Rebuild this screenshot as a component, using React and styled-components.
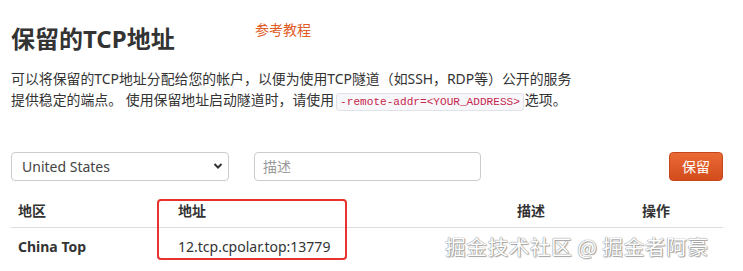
import React from "react";
import styled, { createGlobalStyle } from "styled-components";

const Global = createGlobalStyle`
  html, body { margin: 0; padding: 0; background: #fff; }
  body {
    font-family: "Noto Sans", "Noto Sans CJK SC", sans-serif;
    color: #333;
    width: 743px;
    height: 271px;
    overflow: hidden;
  }
`;

const Page = styled.div`
  position: relative;
  width: 712px;
  padding: 0 20px 0 11px;
`;

const Header = styled.div`
  display: flex;
  align-items: flex-start;
  height: 62px;
`;

const Title = styled.h1`
  margin: 23px 0 0;
  font-size: 24px;
  line-height: 32px;
  font-weight: 700;
  color: #333;
  width: 244px;
`;

const Link = styled.a`
  margin-top: 20px;
  font-size: 14px;
  line-height: 20px;
  color: #e05a24;
  text-decoration: none;
`;

const Lead = styled.p`
  margin: 6px 0 0;
  font-size: 13.9px;
  line-height: 21px;
  color: #333;
`;

const Code = styled.code`
  font-family: "Liberation Mono", "DejaVu Sans Mono", monospace;
  font-size: 11.1px;
  color: #c7254e;
  background: #f7f7f9;
  border: 1px solid #e1e1e8;
  border-radius: 3px;
  padding: 2px 3px;
  margin: 0 1px 0 2px;
`;

const FormRow = styled.div`
  display: flex;
  align-items: center;
  margin-top: 38px;
  height: 30px;
`;

const SelectBox = styled.div`
  width: 218px;
  height: 29px;
  box-sizing: border-box;
  border: 1px solid #ccc;
  border-radius: 4px;
  display: flex;
  align-items: center;
  padding: 0 5px 0 10px;
  font-size: 14px;
  color: #444;
  justify-content: space-between;
`;

const TextInput = styled.div`
  margin-left: 25px;
  width: 227px;
  height: 29px;
  box-sizing: border-box;
  border: 1px solid #ccc;
  border-radius: 4px;
  display: flex;
  align-items: center;
  padding: 0 8px;
  font-size: 14px;
  color: #999;
`;

const Button = styled.button`
  margin-left: auto;
  width: 54px;
  height: 29px;
  border: 1px solid #c4461a;
  border-radius: 4px;
  background: linear-gradient(#ea6a35, #d24c1c);
  color: #fff;
  font-family: inherit;
  font-size: 14px;
  padding: 0;
`;

const Table = styled.div`
  margin-top: 11px;
  width: 712px;
`;

const Row = styled.div`
  display: grid;
  grid-template-columns: 160px 339px 125px 88px;
  height: ${(p) => p.$h}px;
  align-items: center;
  border-bottom: ${(p) => (p.$line ? "1px solid #ddd" : "none")};
`;

const Cell = styled.div`
  padding-left: 7px;
  font-size: 14px;
  font-weight: ${(p) => (p.$bold ? 700 : 400)};
  color: #333;
`;

const Highlight = styled.div`
  position: absolute;
  left: 157px;
  top: 199px;
  width: 190px;
  height: 61px;
  box-sizing: border-box;
  border: 2px solid #e8322d;
  border-radius: 4px;
`;

const Watermark = styled.div`
  position: absolute;
  left: 445px;
  top: 231px;
  font-size: 20.8px;
  font-family: "Noto Sans CJK SC", sans-serif;
  color: #fff;
  letter-spacing: 0.4px;
  text-shadow: 0 0 1px #888, 0 0 1px #888, 1px 1px 1px #aaa;
  white-space: nowrap;
`;

const Chevron = () => (
  <svg width="10" height="8" viewBox="0 0 10 8">
    <path d="M1.5 2 L5 5.5 L8.5 2" fill="none" stroke="#333" strokeWidth="2" />
  </svg>
);

export default function App() {
  return (
    <>
      <Global />
      <Page>
        <Header>
          <Title>保留的TCP地址</Title>
          <Link href="#">参考教程</Link>
        </Header>
        <Lead>
          可以将保留的TCP地址分配给您的帐户，以便为使用TCP隧道（如SSH，RDP等）公开的服务
          <br />
          提供稳定的端点。 使用保留地址启动隧道时，请使用<Code>-remote-addr=&lt;YOUR_ADDRESS&gt;</Code>选项。
        </Lead>
        <FormRow>
          <SelectBox>
            <span>United States</span>
            <Chevron />
          </SelectBox>
          <TextInput>描述</TextInput>
          <Button>保留</Button>
        </FormRow>
        <Table>
          <Row $h={35} $line>
            <Cell $bold>地区</Cell>
            <Cell $bold>地址</Cell>
            <Cell $bold>描述</Cell>
            <Cell $bold>操作</Cell>
          </Row>
          <Row $h={36}>
            <Cell $bold>China Top</Cell>
            <Cell>12.tcp.cpolar.top:13779</Cell>
            <Cell />
            <Cell />
          </Row>
        </Table>
        <Highlight />
        <Watermark>掘金技术社区 @ 掘金者阿豪</Watermark>
      </Page>
    </>
  );
}
